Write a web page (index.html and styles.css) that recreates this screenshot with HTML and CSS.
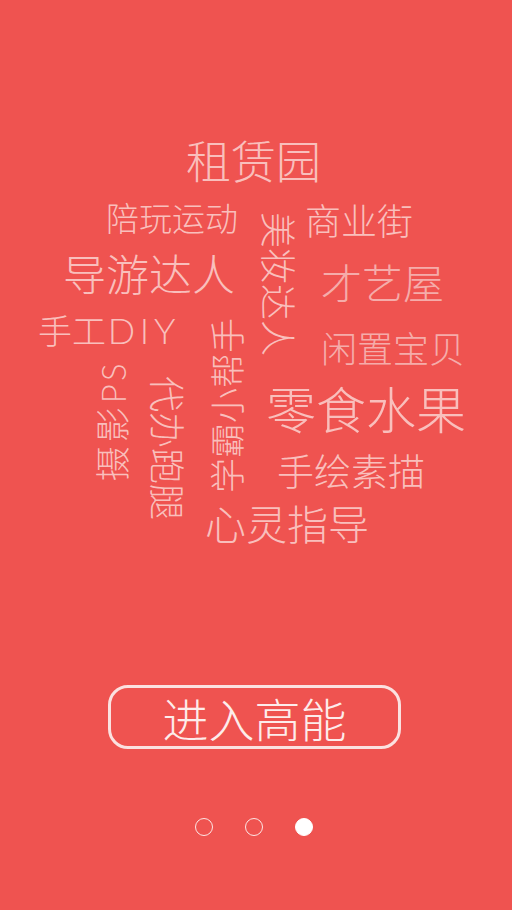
FILE: index.html
```html
<!DOCTYPE html>
<html lang="zh-CN">
<head>
<meta charset="utf-8">
<title>进入高能</title>
<link rel="stylesheet" href="styles.css">
</head>
<body>
<main class="screen">
  <section class="cloud">
    <span class="word w-zulin">租赁园</span>
    <span class="word w-peiwan">陪玩运动</span>
    <span class="word w-shangye">商业街</span>
    <span class="word vert cw w-meizhuang">美妆达人</span>
    <span class="word w-daoyou">导游达人</span>
    <span class="word w-caiyi dim">才艺屋</span>
    <span class="word w-shougong">手工<span class="latin">DIY</span></span>
    <span class="word w-xianzhi dim">闲置宝贝</span>
    <span class="word vert ccw w-xueba">学霸小帮手</span>
    <span class="word vert ccw w-sheying">摄影<span class="latin ps">PS</span></span>
    <span class="word vert cw w-daiban">代办跑腿</span>
    <span class="word w-lingshi">零食水果</span>
    <span class="word w-shouhui">手绘素描</span>
    <span class="word w-xinling">心灵指导</span>
  </section>
  <button class="enter">进入高能</button>
  <nav class="dots">
    <span class="dot"></span>
    <span class="dot"></span>
    <span class="dot active"></span>
  </nav>
</main>
</body>
</html>
```

FILE: styles.css
```css
html, body {
  margin: 0;
  padding: 0;
  background: #ef5350;
}

.screen {
  width: 512px;
  height: 910px;
  display: flex;
  flex-direction: column;
  align-items: center;
  font-family: "Noto Sans CJK SC", "Noto Sans", sans-serif;
  font-weight: 300;
  overflow: hidden;
}

.cloud {
  position: relative;
  width: 512px;
  height: 685px;
  flex: none;
}

.word {
  position: absolute;
  line-height: 1;
  white-space: nowrap;
  color: #f9bfbc;
}

.word.dim {
  color: #f5acaa;
}

.latin {
  font-family: "Lato", "Noto Sans", sans-serif;
  font-weight: 300;
  font-size: 1.06em;
  letter-spacing: 0.13em;
  margin-left: 0.05em;
}

.latin.ps {
  font-size: 0.94em;
  letter-spacing: 0.1em;
  margin-left: 0.08em;
}

.vert {
  writing-mode: vertical-rl;
  text-orientation: sideways;
}

.vert.ccw {
  transform: rotate(180deg);
}

.w-zulin { font-size: 45px; left: 186px; top: 137px; }
.w-peiwan { font-size: 33px; left: 106px; top: 201px; }
.w-shangye { font-size: 36px; left: 305px; top: 201px; }
.w-meizhuang { font-size: 36px; left: 262px; top: 212px; }
.w-daoyou { font-size: 43px; left: 63px; top: 251px; }
.w-caiyi { font-size: 41px; left: 321px; top: 261px; }
.w-shougong { font-size: 34px; left: 38px; top: 312px; }
.w-xianzhi { font-size: 36px; left: 321px; top: 329px; }
.w-xueba { font-size: 35px; left: 208px; top: 318px; }
.w-sheying { font-size: 35px; letter-spacing: 4px; left: 93px; top: 360px; }
.w-daiban { font-size: 36px; left: 151px; top: 376px; }
.w-lingshi { font-size: 50px; left: 266px; top: 382px; }
.w-shouhui { font-size: 37px; left: 277px; top: 452px; }
.w-xinling { font-size: 41px; left: 205px; top: 502px; }

.enter {
  flex: none;
  width: 293px;
  height: 64px;
  margin-left: -3px;
  border: 3px solid #fbe1e0;
  border-radius: 20px;
  background: transparent;
  color: #fdeceb;
  font-family: inherit;
  font-weight: 300;
  font-size: 46px;
  line-height: 1;
  padding: 0;
}

.dots {
  display: flex;
  gap: 32px;
  margin-top: 69px;
  margin-left: -5px;
}

.dot {
  width: 18px;
  height: 18px;
  box-sizing: border-box;
  border: 1.5px solid #fde6e5;
  border-radius: 50%;
}

.dot.active {
  background: #ffffff;
  border-color: #ffffff;
}
```
